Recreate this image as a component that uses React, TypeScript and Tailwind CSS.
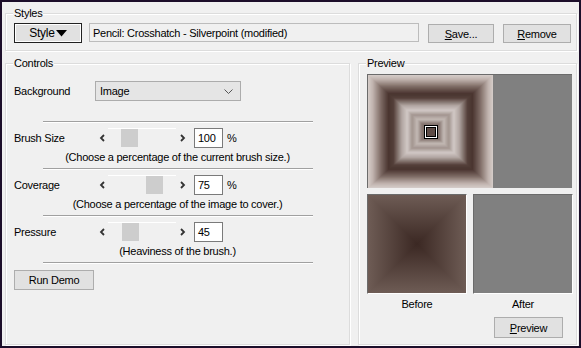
import React from 'react';

const font = { fontFamily: '"Liberation Sans", Arial, sans-serif' };

function Group({ label, className, children }: { label: string; className: string; children: React.ReactNode }) {
  return (
    <div className={`relative border border-[#dcdcdc] shadow-[inset_1px_1px_0_#fff,1px_1px_0_#fff] ${className}`}>
      <span className="absolute left-[7px] top-[-8px] bg-[#f0f0f0] px-[1px] leading-[14px]">{label}</span>
      {children}
    </div>
  );
}

function Btn({ children, className = '' }: { children: React.ReactNode; className?: string }) {
  return (
    <div className={`flex items-center justify-center border border-[#adadad] bg-[#e1e1e1] ${className}`}>{children}</div>
  );
}

function Separator() {
  return <div className="mx-auto h-[2px] w-[270px] border-t border-[#a0a0a0] border-b border-b-white" />;
}

function SliderRow({ label, value, thumb, pct }: { label: string; value: string; thumb: number; pct: boolean }) {
  return (
    <div className="flex h-[19px] items-center pl-[8px]">
      <span className="w-[81px]">{label}</span>
      <div className="flex h-[19px] w-[94px] items-center">
        <span className="flex w-[13px] justify-center">
          <svg width="6" height="8" viewBox="0 0 6 8"><path d="M5 1 L2 4 L5 7" fill="none" stroke="#333" strokeWidth="1.8" /></svg>
        </span>
        <div className="relative h-[19px] flex-1 border-t border-white">
          <div className="absolute top-[0px] h-[18px] w-[17px] bg-[#cdcdcd]" style={{ left: thumb }} />
        </div>
        <span className="flex w-[13px] justify-center">
          <svg width="6" height="8" viewBox="0 0 6 8"><path d="M1 1 L4 4 L1 7" fill="none" stroke="#333" strokeWidth="1.8" /></svg>
        </span>
      </div>
      <div className="ml-[5px] flex h-[20px] w-[29px] items-center border border-[#7a7a7a] bg-white pl-[3px]">{value}</div>
      {pct && <span className="ml-[4px]">%</span>}
    </div>
  );
}

const stops: [number, string][] = [
  [1.0, '#d4cbc7'],
  [0.93, '#c0b3ae'],
  [0.8, '#7d6a64'],
  [0.68, '#4a3530'],
  [0.6, '#54403a'],
  [0.47, '#b0a4a0'],
  [0.38, '#d2c9c6'],
  [0.3, '#a2958f'],
  [0.22, '#c4bab6'],
  [0.15, '#8a7a74'],
  [0.0, '#5e4c46'],
];

function hex(c: string) {
  return [1, 3, 5].map((i) => parseInt(c.slice(i, i + 2), 16));
}

function colorAt(t: number) {
  for (let i = 0; i < stops.length - 1; i++) {
    const [t0, c0] = stops[i];
    const [t1, c1] = stops[i + 1];
    if (t <= t0 && t >= t1) {
      const k = (t0 - t) / (t0 - t1);
      const a = hex(c0);
      const b = hex(c1);
      return `rgb(${a.map((v, j) => Math.round(v + (b[j] - v) * k)).join(',')})`;
    }
  }
  return stops[stops.length - 1][1];
}

function Squares() {
  const w = 125;
  const h = 113;
  const n = 62;
  const rects = [];
  for (let i = 0; i < n; i++) {
    const t = 1 - i / n;
    const rw = w * t;
    const rh = h * t;
    rects.push(<rect key={i} x={(w - rw) / 2} y={(h - rh) / 2} width={rw} height={rh} fill={colorAt(t)} />);
  }
  const cx = Math.round(w / 2);
  const cy = Math.round(h / 2);
  return (
    <svg width={w} height={h} viewBox={`0 0 ${w} ${h}`} className="block">
      {rects}
      <rect x={cx - 7} y={cy - 7} width={14} height={14} fill="#000" />
      <rect x={cx - 6} y={cy - 6} width={12} height={12} fill="#fff" />
      <rect x={cx - 5} y={cy - 5} width={10} height={10} fill="#000" />
      <rect x={cx - 4} y={cy - 4} width={8} height={8} fill="#5e4c46" />
    </svg>
  );
}

function Pyramid() {
  const s = 98;
  const c = s / 2;
  const edge = '#6e5c55';
  const mid = '#3b2823';
  return (
    <svg width={s} height={s} viewBox={`0 0 ${s} ${s}`} className="block">
      <defs>
        <radialGradient id="bg" cx="0.5" cy="0.5" r="0.7">
          <stop offset="0" stopColor={mid} />
          <stop offset="1" stopColor={edge} />
        </radialGradient>
        <linearGradient id="gt" x1="0" y1="0" x2="0" y2="1">
          <stop offset="0" stopColor={edge} />
          <stop offset="1" stopColor={mid} />
        </linearGradient>
        <linearGradient id="gb" x1="0" y1="1" x2="0" y2="0">
          <stop offset="0" stopColor={edge} />
          <stop offset="1" stopColor={mid} />
        </linearGradient>
        <linearGradient id="gl" x1="0" y1="0" x2="1" y2="0">
          <stop offset="0" stopColor={edge} />
          <stop offset="1" stopColor={mid} />
        </linearGradient>
        <linearGradient id="gr" x1="1" y1="0" x2="0" y2="0">
          <stop offset="0" stopColor={edge} />
          <stop offset="1" stopColor={mid} />
        </linearGradient>
      </defs>
      <rect width={s} height={s} fill="url(#bg)" />
      <g shapeRendering="crispEdges">
        <polygon points={`0,0 ${s},0 ${c},${c}`} fill="url(#gt)" />
        <polygon points={`0,${s} ${s},${s} ${c},${c}`} fill="url(#gb)" />
        <polygon points={`0,0 0,${s} ${c},${c}`} fill="url(#gl)" />
        <polygon points={`${s},0 ${s},${s} ${c},${c}`} fill="url(#gr)" />
      </g>
    </svg>
  );
}

export default function App() {
  return (
    <div
      className="h-[348px] w-[581px] border-2 border-[#1c0e2a] bg-[#f0f0f0] text-[11px] leading-[14px] tracking-[-0.25px] text-black"
      style={font}
    >
      {/* Styles */}
      <Group label="Styles" className="ml-[3px] mt-[11px] h-[38px] w-[572px]">
        <div className="flex items-start pl-[8px] pt-[9px]">
          <div className="flex h-[20px] w-[68px] items-center justify-center gap-[1px] border border-[#222] bg-[#e1e1e1] text-[12px] shadow-[inset_0_0_0_1px_#fff]">
            Style
            <svg width="11" height="7" viewBox="0 0 11 7"><path d="M0 0 H11 L5.5 6.5 Z" fill="#000" /></svg>
          </div>
          <div className="ml-[7px] flex h-[19px] w-[330px] items-center border border-[#bcbcbc] pl-[3px]">
            Pencil: Crosshatch - Silverpoint (modified)
          </div>
          <Btn className="ml-[9px] mt-[1px] h-[19px] w-[66px]">
            <span><u>S</u>ave...</span>
          </Btn>
          <Btn className="ml-[9px] mt-[1px] h-[19px] w-[68px]">
            <span><u>R</u>emove</span>
          </Btn>
        </div>
      </Group>

      <div className="ml-[3px] mt-[12px] flex gap-[8px]">
        {/* Controls */}
        <Group label="Controls" className="h-[282px] w-[345px]">
          <div className="flex flex-col pt-[17px]">
            <div className="flex h-[20px] items-center pl-[8px]">
              <span className="w-[81px]">Background</span>
              <div className="flex h-[20px] w-[146px] items-center justify-between border border-[#acacac] bg-[#e5e5e5] pl-[4px] pr-[7px]">
                Image
                <svg width="9" height="5" viewBox="0 0 9 5"><path d="M0.5 0.5 L4.5 4.5 L8.5 0.5" fill="none" stroke="#555" strokeWidth="1" /></svg>
              </div>
            </div>
            <div className="mt-[20px]"><Separator /></div>
            <div className="mt-[5px]"><SliderRow label="Brush Size" value="100" thumb={13} pct /></div>
            <div className="mt-[3px] text-center">(Choose a percentage of the current brush size.)</div>
            <div className="mt-[4px]"><Separator /></div>
            <div className="mt-[5px]"><SliderRow label="Coverage" value="75" thumb={38} pct /></div>
            <div className="mt-[3px] text-center">(Choose a percentage of the image to cover.)</div>
            <div className="mt-[4px]"><Separator /></div>
            <div className="mt-[5px]"><SliderRow label="Pressure" value="45" thumb={14} pct={false} /></div>
            <div className="mt-[3px] text-center">(Heaviness of the brush.)</div>
            <div className="mt-[4px]"><Separator /></div>
            <div className="pl-[8px] pt-[6px]">
              <Btn className="h-[20px] w-[80px]">Run Demo</Btn>
            </div>
          </div>
        </Group>

        {/* Preview */}
        <Group label="Preview" className="h-[282px] w-[219px]">
          <div className="flex flex-col pl-[8px] pt-[10px]">
            <div className="flex w-[205px] border-l border-t border-[#6b6b6b]">
              <Squares />
              <div className="h-[113px] flex-1 bg-[#808080]" />
            </div>
            <div className="mt-[6px] flex gap-[6px]">
              <div className="flex w-[100px] flex-col items-center">
                <div className="border-l border-t border-[#6b6b6b] border-b border-r border-b-white border-r-white">
                  <Pyramid />
                </div>
                <span className="mt-[3px]">Before</span>
              </div>
              <div className="flex w-[100px] flex-col items-center">
                <div className="h-[100px] w-[100px] border-l border-t border-[#6b6b6b] border-b border-r border-b-white border-r-white bg-[#808080]" />
                <span className="mt-[3px]">After</span>
              </div>
            </div>
            <div className="mt-[6px] flex justify-end pr-[13px]">
              <Btn className="h-[21px] w-[69px]">
                <span><u>P</u>review</span>
              </Btn>
            </div>
          </div>
        </Group>
      </div>
    </div>
  );
}
